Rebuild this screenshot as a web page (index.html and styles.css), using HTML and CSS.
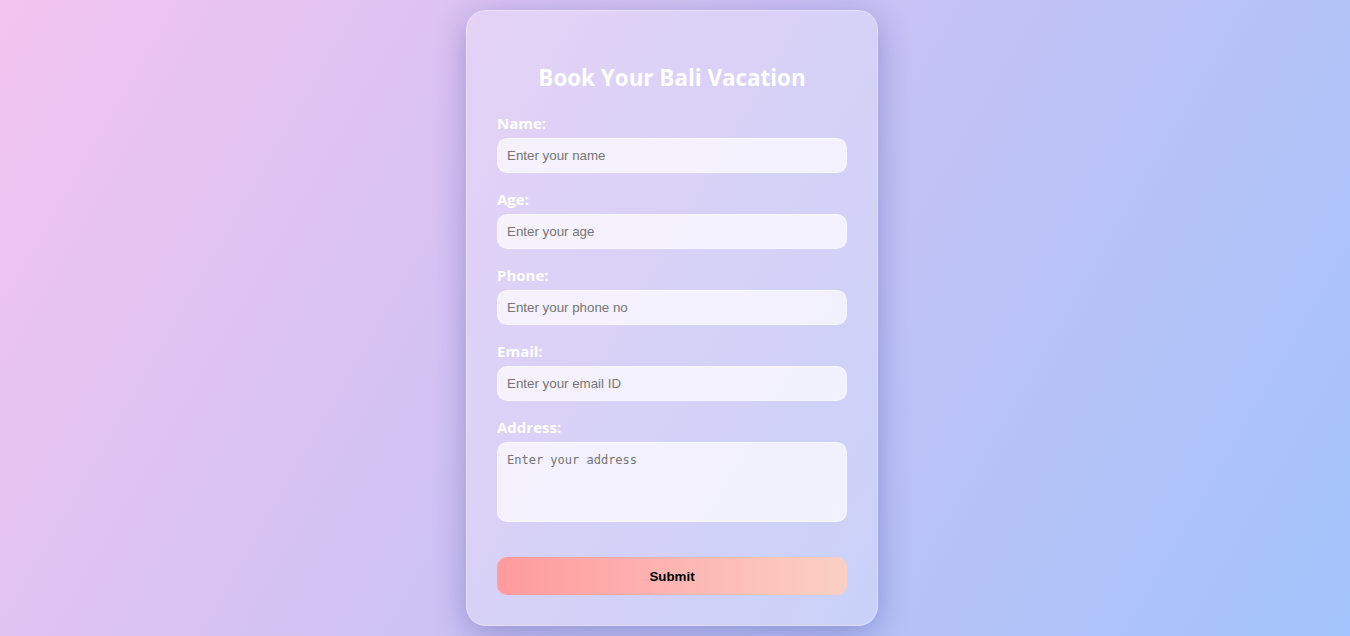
FILE: index.html
```html
<!DOCTYPE html>
<html lang="en">
<head>
<meta charset="utf-8">
<title>Book Your Bali Vacation</title>
<link rel="stylesheet" href="styles.css">
</head>
<body>
<div class="page">
  <form class="card">
    <h2 class="title">Book Your Bali Vacation</h2>
    <label class="label" for="name">Name:</label>
    <input class="field" id="name" type="text" placeholder="Enter your name">
    <label class="label" for="age">Age:</label>
    <input class="field" id="age" type="text" placeholder="Enter your age">
    <label class="label" for="phone">Phone:</label>
    <input class="field" id="phone" type="text" placeholder="Enter your phone no">
    <label class="label" for="email">Email:</label>
    <input class="field" id="email" type="text" placeholder="Enter your email ID">
    <label class="label" for="address">Address:</label>
    <textarea class="area" id="address" placeholder="Enter your address"></textarea>
    <button class="submit" type="button">Submit</button>
  </form>
</div>
</body>
</html>
```
FILE: styles.css
```css
* { box-sizing: border-box; }
html, body { margin: 0; padding: 0; }
body {
  height: 636px;
  background: linear-gradient(120deg, #f3c4f0 0%, #c9c2f4 50%, #a2c3fb 100%);
  font-family: "Open Sans", "Liberation Sans", sans-serif;
}
.page {
  height: 100%;
  display: flex;
  justify-content: center;
  align-items: center;
  padding-right: 6px;
}
.card {
  width: 412px;
  display: flex;
  flex-direction: column;
  padding: 30px;
  border-radius: 20px;
  background: rgba(255, 255, 255, 0.25);
  border: 1px solid rgba(255, 255, 255, 0.3);
  box-shadow: 0 8px 32px 0 rgba(31, 38, 135, 0.3);
}
.title {
  margin: 21px 0 19px;
  font-size: 22.4px;
  line-height: 32px;
  font-weight: 700;
  color: #ffffff;
  text-align: center;
}
.label {
  display: block;
  font-size: 15px;
  line-height: 20px;
  font-weight: 700;
  color: #ffffff;
  margin-bottom: 5px;
}
.field, .area {
  width: 100%;
  border: 1px solid rgba(255, 255, 255, 0.35);
  border-radius: 10px;
  background: rgba(255, 255, 255, 0.7);
  outline: none;
  color: #333;
}
.field {
  height: 35px;
  margin-bottom: 16px;
  padding: 0 9px;
  font-family: "Liberation Sans", Arial, sans-serif;
  font-size: 13.33px;
}
.area {
  height: 80px;
  margin-bottom: 35px;
  padding: 9px 9px;
  resize: none;
  font-family: "DejaVu Sans Mono", monospace;
  font-size: 12px;
  line-height: 16px;
}
.field::placeholder, .area::placeholder { color: #757575; }
.submit {
  height: 38px;
  border: none;
  border-radius: 10px;
  background: linear-gradient(90deg, #ff9a9e 0%, #fad0c4 100%);
  font-family: "Liberation Sans", Arial, sans-serif;
  font-size: 13.33px;
  font-weight: 700;
  color: #000;
}
```
